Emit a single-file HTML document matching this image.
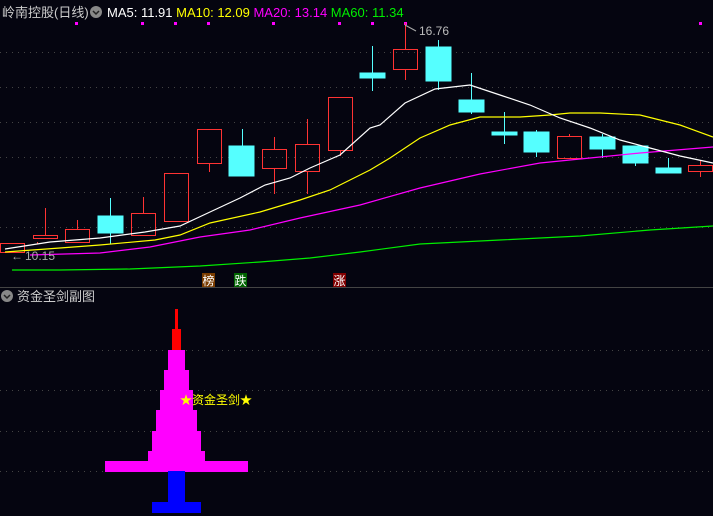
<!DOCTYPE html><html><head><meta charset="utf-8"><style>
body{margin:0;background:#050510;width:713px;height:516px;overflow:hidden;font-family:"Liberation Sans","Noto Sans CJK SC",sans-serif}
</style></head><body>
<svg width="713" height="516" style="position:absolute;left:0;top:0" font-family="Liberation Sans, Noto Sans CJK SC, sans-serif">
<rect width="713" height="516" fill="#050510"/>
<g stroke="#444" stroke-dasharray="1,5" stroke-width="1">
<line x1="0" y1="52.5" x2="713" y2="52.5"/><line x1="0" y1="87.5" x2="713" y2="87.5"/><line x1="0" y1="122.5" x2="713" y2="122.5"/><line x1="0" y1="157.5" x2="713" y2="157.5"/><line x1="0" y1="192.5" x2="713" y2="192.5"/><line x1="0" y1="227.5" x2="713" y2="227.5"/>
<line x1="0" y1="350.5" x2="713" y2="350.5"/><line x1="0" y1="390.5" x2="713" y2="390.5"/><line x1="0" y1="431.5" x2="713" y2="431.5"/><line x1="0" y1="471.5" x2="713" y2="471.5"/>
</g>
<line x1="0" y1="287.5" x2="713" y2="287.5" stroke="#444"/>
<g fill="#ff00ff"><rect x="75" y="22" width="3" height="3"/><rect x="141" y="22" width="3" height="3"/><rect x="174" y="22" width="3" height="3"/><rect x="207" y="22" width="3" height="3"/><rect x="272" y="22" width="3" height="3"/><rect x="338" y="22" width="3" height="3"/><rect x="371" y="22" width="3" height="3"/><rect x="404" y="22" width="3" height="3"/><rect x="699" y="22" width="3" height="3"/></g>
<g stroke-width="1">
<!-- red candles -->
<g stroke="#ff3333" fill="none">
<line x1="37.5" y1="242" x2="37.5" y2="244"/><rect x="0.5" y="243.5" width="24" height="9"/>
<line x1="45.5" y1="208" x2="45.5" y2="235"/><rect x="33.5" y="235.5" width="24" height="3"/>
<line x1="77.5" y1="220" x2="77.5" y2="229"/><rect x="65.5" y="229.5" width="24" height="13"/>
<line x1="143.5" y1="197" x2="143.5" y2="213"/><rect x="131.5" y="213.5" width="24" height="22"/>
<rect x="164.5" y="173.5" width="24" height="48"/>
<line x1="209.5" y1="163" x2="209.5" y2="172"/><rect x="197.5" y="129.5" width="24" height="34"/>
<line x1="274.5" y1="137" x2="274.5" y2="149"/><line x1="274.5" y1="168" x2="274.5" y2="194"/><rect x="262.5" y="149.5" width="24" height="19"/>
<line x1="307.5" y1="119" x2="307.5" y2="144"/><line x1="307.5" y1="171" x2="307.5" y2="194"/><rect x="295.5" y="144.5" width="24" height="27"/>
<line x1="340.5" y1="150" x2="340.5" y2="156"/><rect x="328.5" y="97.5" width="24" height="53"/>
<line x1="405.5" y1="23" x2="405.5" y2="49"/><line x1="405.5" y1="69" x2="405.5" y2="80"/><rect x="393.5" y="49.5" width="24" height="20"/>
<line x1="569.5" y1="134" x2="569.5" y2="136"/><rect x="557.5" y="136.5" width="24" height="22"/>
<line x1="700.5" y1="160" x2="700.5" y2="165"/><line x1="700.5" y1="171" x2="700.5" y2="177"/><rect x="688.5" y="165.5" width="24" height="6"/>
</g>
<g stroke="#55ffff" fill="#55ffff">
<line x1="110.5" y1="198" x2="110.5" y2="244"/><rect x="98" y="216" width="25" height="17"/>
<line x1="242.5" y1="129" x2="242.5" y2="176"/><rect x="229" y="146" width="25" height="30"/>
<line x1="372.5" y1="46" x2="372.5" y2="91"/><rect x="360" y="73" width="25" height="5"/>
<line x1="438.5" y1="40" x2="438.5" y2="90"/><rect x="426" y="47" width="25" height="34"/>
<line x1="471.5" y1="73" x2="471.5" y2="114"/><rect x="459" y="100" width="25" height="12"/>
<line x1="504.5" y1="112" x2="504.5" y2="144"/><rect x="492" y="132" width="25" height="3"/>
<line x1="536.5" y1="130" x2="536.5" y2="157"/><rect x="524" y="132" width="25" height="20"/>
<line x1="602.5" y1="134" x2="602.5" y2="158"/><rect x="590" y="137" width="25" height="12"/>
<line x1="635.5" y1="146" x2="635.5" y2="166"/><rect x="623" y="146" width="25" height="17"/>
<line x1="668.5" y1="158" x2="668.5" y2="168"/><rect x="656" y="168" width="25" height="5"/>
</g>
</g>
<g fill="none" stroke-width="1.2">
<polyline stroke="#00ee00" points="12,270 60,270 130,269 200,266 260,262 310,258 360,252 420,244 500,240 580,236 650,230 713,226"/>
<polyline stroke="#ff00ff" points="30,255 100,253 150,247 200,237 250,230 300,218 360,205 420,188 480,174 540,163 600,157 640,153 713,147"/>
<polyline stroke="#ffff00" points="5,252 60,248 100,245 155,240 180,235 210,223 260,212 300,200 330,190 350,180 370,170 390,158 420,138 450,125 480,117 520,117 550,115 570,113 600,113 640,115 680,125 713,137"/>
<polyline stroke="#ffffff" points="5,249 50,242 100,238 145,232 180,226 210,212 240,198 265,185 290,178 310,168 340,155 370,128 380,125 405,103 435,89 470,85 500,95 530,105 560,118 590,128 620,140 650,148 680,156 713,163"/>
</g>
<text x="25" y="260" fill="#aaaaaa" font-size="12">10.15</text>
<text x="11" y="260" fill="#aaaaaa" font-size="12">←</text>
<line x1="405" y1="25" x2="416" y2="31" stroke="#aaa"/>
<text x="419" y="35" fill="#bbbbbb" font-size="12">16.76</text>
<rect x="202" y="273" width="13" height="14" fill="#7a3c00"/><text x="202.5" y="285" fill="#fff" font-size="12">榜</text>
<rect x="234" y="273" width="13" height="14" fill="#006400"/><text x="234.5" y="285" fill="#fff" font-size="12">跌</text>
<rect x="333" y="273" width="13" height="14" fill="#800000"/><text x="333.5" y="285" fill="#fff" font-size="12">涨</text>
<text x="2" y="17" fill="#cccccc" font-size="13">岭南控股(日线)</text>
<circle cx="96" cy="12" r="6" fill="#888"/><path d="M93 11 L96 14 L99 11" stroke="#222" fill="none" stroke-width="1.5"/>
<text x="107" y="17" font-size="13"><tspan fill="#ffffff">MA5: 11.91 </tspan><tspan fill="#ffff00">MA10: 12.09 </tspan><tspan fill="#ff00ff">MA20: 13.14 </tspan><tspan fill="#00ee00">MA60: 11.34</tspan></text>
<circle cx="7" cy="296" r="6" fill="#888"/><path d="M4 295 L7 298 L10 295" stroke="#222" fill="none" stroke-width="1.5"/>
<text x="17" y="301" fill="#cccccc" font-size="13">资金圣剑副图</text>
<rect x="175" y="309" width="3" height="20" fill="#ff0000"/>
<rect x="172" y="329" width="9" height="21" fill="#ff0000"/>
<g fill="#ff00ff">
<rect x="168" y="350" width="17" height="20"/><rect x="164" y="370" width="25" height="20"/><rect x="160" y="390" width="33" height="20"/><rect x="156" y="410" width="41" height="21"/><rect x="152" y="431" width="49" height="20"/><rect x="148" y="451" width="57" height="10"/><rect x="105" y="461" width="143" height="11"/>
</g>
<rect x="168" y="471" width="17" height="31" fill="#0000ff"/>
<rect x="152" y="502" width="49" height="11" fill="#0000ff"/>
<text x="180" y="404" fill="#ffff00" font-size="12">★资金圣剑★</text>
</svg>
</body></html>
